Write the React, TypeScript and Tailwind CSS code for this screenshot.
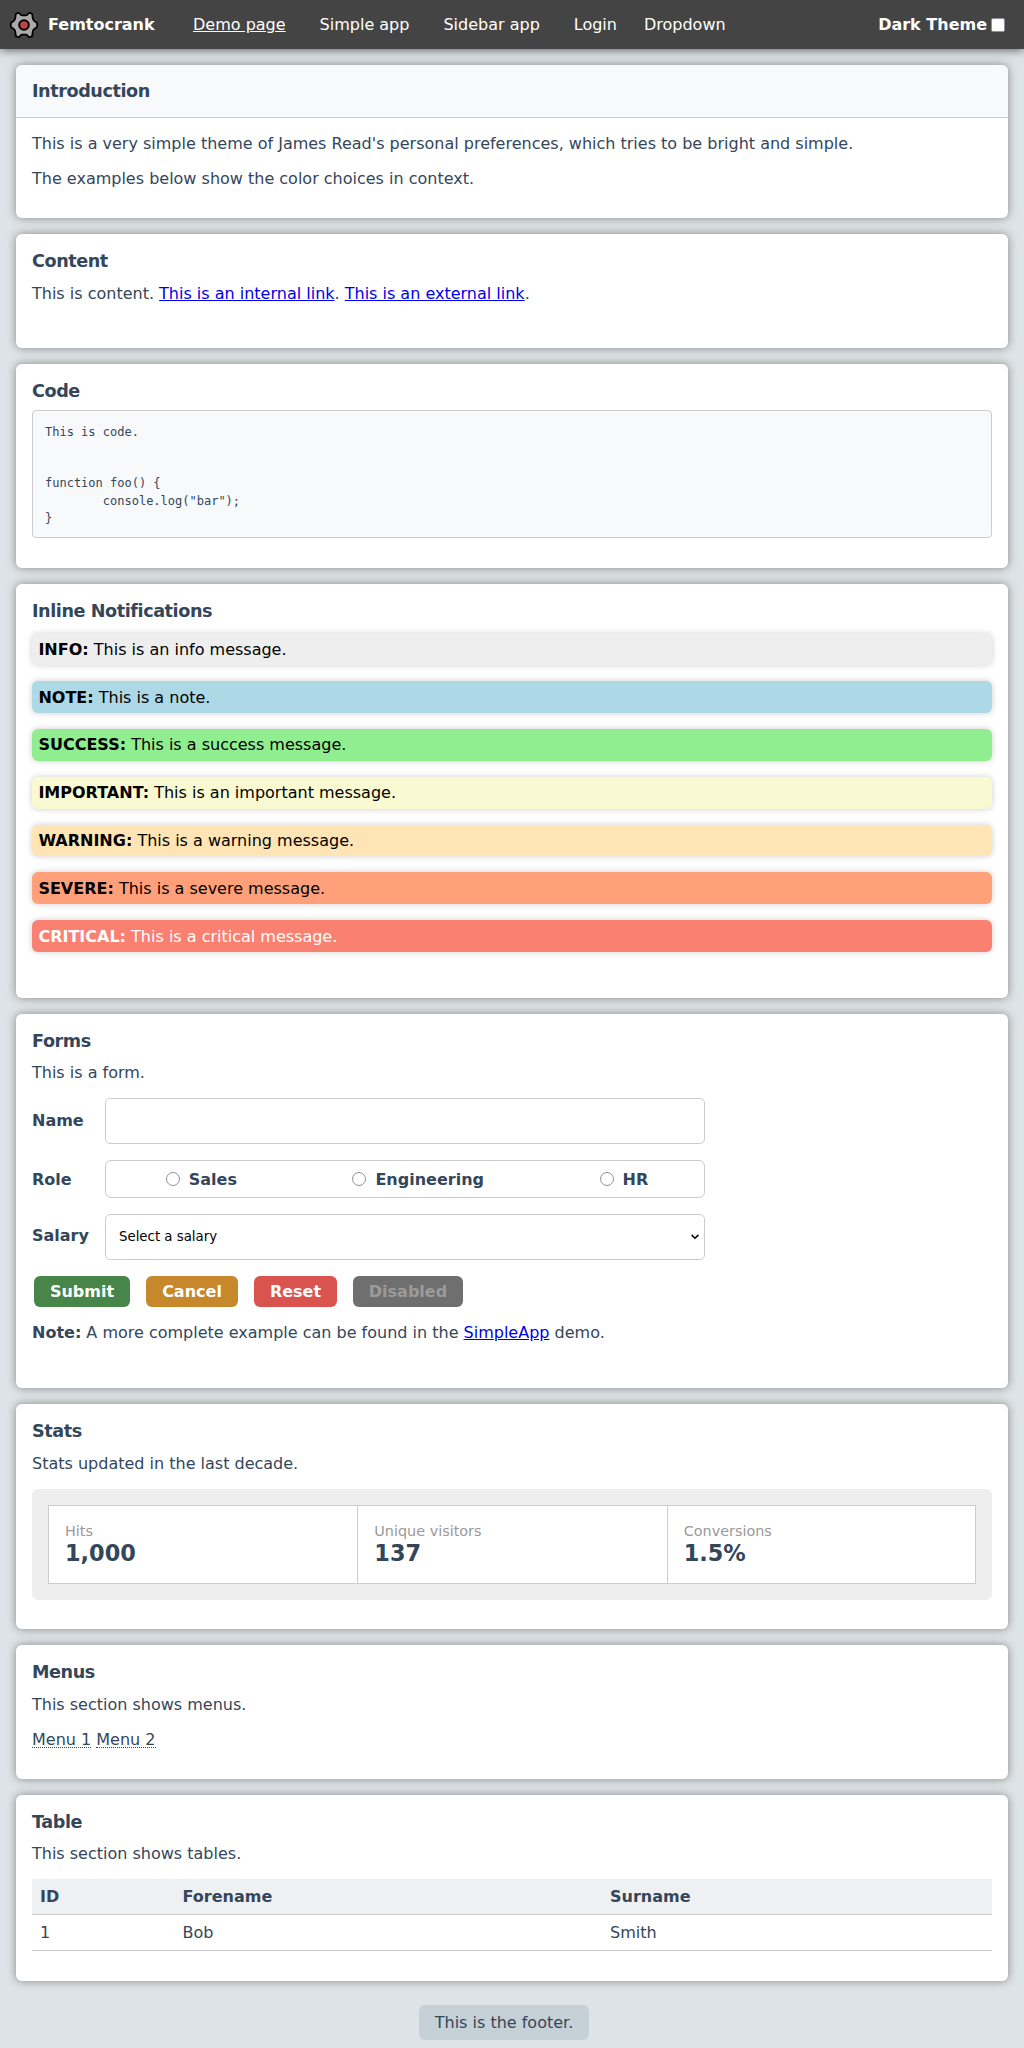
import type { ReactNode } from 'react';

function Card({ title, className, children }: { title: string; className: string; children: ReactNode }) {
  return (
    <section className={`mx-4 mb-4 rounded-md bg-white px-4 pt-[17px] shadow-[0_0_10px_#888] ${className}`}>
      <h2 className="text-[17.6px] leading-[21px] font-bold tracking-[-0.024em]">{title}</h2>
      {children}
    </section>
  );
}

const notices = [
  { label: 'INFO:', text: 'This is an info message.', tone: 'bg-[#eee] text-black' },
  { label: 'NOTE:', text: 'This is a note.', tone: 'bg-[#add8e6] text-black' },
  { label: 'SUCCESS:', text: 'This is a success message.', tone: 'bg-[#90ee90] text-black' },
  { label: 'IMPORTANT:', text: 'This is an important message.', tone: 'bg-[#fafad2] text-black' },
  { label: 'WARNING:', text: 'This is a warning message.', tone: 'bg-[#ffe4b5] text-black' },
  { label: 'SEVERE:', text: 'This is a severe message.', tone: 'bg-[#ffa07a] text-black' },
  { label: 'CRITICAL:', text: 'This is a critical message.', tone: 'bg-[#fa8072] text-white' },
];

const stats = [
  { name: 'Hits', value: '1,000' },
  { name: 'Unique visitors', value: '137' },
  { name: 'Conversions', value: '1.5%' },
];

const buttons = [
  { label: 'Submit', style: 'bg-[#488548] text-white w-24' },
  { label: 'Cancel', style: 'bg-[#c6882b] text-white w-[92px]' },
  { label: 'Reset', style: 'bg-[#d9534f] text-white w-[83px]' },
  { label: 'Disabled', style: 'bg-[#6f6f6f] text-[#9b9b9b] w-[110px]' },
];

function Gear() {
  return (
    <svg viewBox="0 0 30 28" className="h-7 w-[30px]" strokeLinejoin="round">
      <path
        d="M6.6 4 Q6.8 2.8 7.8 2.4 L9.2 1.9 Q10.3 1.6 10.9 2.9 Q11.7 4.3 13.2 4.3 L16.8 4.3 Q18.3 4.3 19.1 2.9 Q19.7 1.6 20.8 1.9 L22.2 2.4 Q23.2 2.8 23.4 4 L23.7 7 Q23.9 9.4 25.6 10.3 Q28.2 11.2 28.2 12.7 L28.2 15.3 Q28.2 16.8 25.6 17.7 Q23.9 18.6 23.7 21 L23.4 24 Q23.2 25.2 22.2 25.6 L20.8 26.1 Q19.7 26.4 19.1 25.1 Q18.3 23.7 16.8 23.7 L13.2 23.7 Q11.7 23.7 10.9 25.1 Q10.3 26.4 9.2 26.1 L7.8 25.6 Q6.8 25.2 6.6 24 L6.3 21 Q6.1 18.6 4.4 17.7 Q1.8 16.8 1.8 15.3 L1.8 12.7 Q1.8 11.2 4.4 10.3 Q6.1 9.4 6.3 7 Z"
        fill="#aaa"
        stroke="#000"
        strokeWidth="1.8"
      />
      <circle cx="15" cy="14" r="4.8" fill="#c04444" stroke="#000" strokeWidth="2" />
    </svg>
  );
}

export default function App() {
  return (
    <div className="min-h-[2048px] bg-[#dee3e7] font-['DejaVu_Sans',sans-serif] text-base leading-[19px] text-[#33465a]">
      <header className="mb-4 flex h-[49px] items-center bg-[#444] pl-[9px] text-white shadow-[0_0_10px_#444]">
        <Gear />
        <b className="ml-[9px] w-[145px]">Femtocrank</b>
        <nav className="flex gap-[34px]">
          <a className="underline">Demo page</a>
          <a>Simple app</a>
          <a>Sidebar app</a>
          <a>Login</a>
          <a className="-ml-[7px]">Dropdown</a>
        </nav>
        <label className="mr-[19px] ml-auto flex items-center gap-1 font-bold">
          Dark Theme
          <input type="checkbox" className="size-[14px] appearance-none rounded-[2px] border border-[#8f8f9d] bg-white" />
        </label>
      </header>

      <section className="mx-4 mb-4 h-[153px] rounded-md bg-white shadow-[0_0_10px_#888]">
        <div className="h-[53px] rounded-t-md border-b border-[#ccc] bg-[#f8f9fb] px-4 pt-4">
          <h2 className="text-[17.6px] leading-[21px] font-bold tracking-[-0.024em]">Introduction</h2>
        </div>
        <div className="space-y-4 px-4 pt-4">
          <p>This is a very simple theme of James Read's personal preferences, which tries to be bright and simple.</p>
          <p>The examples below show the color choices in context.</p>
        </div>
      </section>

      <Card title="Content" className="h-[114px]">
        <p className="mt-3">
          This is content. <a className="text-[#0000ee] underline">This is an internal link</a>.{' '}
          <a className="text-[#0000ee] underline">This is an external link</a>.
        </p>
      </Card>

      <Card title="Code" className="h-[204px]">
        <pre className="mt-2 h-32 rounded border border-[#ccc] bg-[#f8f9fb] px-3 py-[13px] font-['DejaVu_Sans_Mono',monospace] text-xs leading-[17.15px] [tab-size:8]">
          {'This is code.\n\n\nfunction foo() {\n\tconsole.log("bar");\n}'}
        </pre>
      </Card>

      <Card title="Inline Notifications" className="h-[414px]">
        <div className="mt-[11.5px] flex flex-col gap-4">
          {notices.map((n) => (
            <p key={n.label} className={`rounded-md p-[6.4px] shadow-[0_0_6px_#ccc] ${n.tone}`}>
              <b>{n.label}</b> {n.text}
            </p>
          ))}
        </div>
      </Card>

      <Card title="Forms" className="h-[374px]">
        <p className="mt-[11px]">This is a form.</p>
        <div className="mt-4 grid w-[673px] grid-cols-[57px_600px] items-center gap-4 font-bold">
          <span className="pb-0.5">Name</span>
          <input className="h-[46px] rounded-[5px] border border-[#ccc] bg-white" />
          <span>Role</span>
          <div className="flex h-[38px] items-center justify-around rounded-md border border-[#ccc]">
            {['Sales', 'Engineering', 'HR'].map((role) => (
              <label key={role} className="flex items-center">
                <input
                  type="radio"
                  name="role"
                  className="mr-[9px] ml-1 size-[14px] appearance-none rounded-full border border-[#8f8f9d] bg-white"
                />
                {role}
              </label>
            ))}
          </div>
          <span className="pb-1">Salary</span>
          <div className="grid items-center">
            <select className="col-start-1 row-start-1 h-[46px] appearance-none rounded-[5px] border border-[#ccc] bg-white pb-px pl-[13px] text-[13.333px] font-normal text-black">
              <option>Select a salary</option>
            </select>
            <svg
              viewBox="0 0 8 6"
              className="pointer-events-none col-start-1 row-start-1 mr-[6px] h-1.5 w-2 justify-self-end"
              fill="none"
              stroke="#000"
              strokeWidth="1.5"
            >
              <path d="M0.6 0.9 L4 4.3 L7.4 0.9" />
            </svg>
          </div>
        </div>
        <div className="mt-4 ml-0.5 flex gap-4">
          {buttons.map((b) => (
            <button key={b.label} className={`h-[31px] rounded-md font-bold ${b.style}`}>
              {b.label}
            </button>
          ))}
        </div>
        <p className="mt-4">
          <b>Note:</b> A more complete example can be found in the <a className="text-[#0000ee] underline">SimpleApp</a> demo.
        </p>
      </Card>

      <Card title="Stats" className="h-[225px]">
        <p className="mt-3">Stats updated in the last decade.</p>
        <div className="mt-4 h-[111px] rounded-md bg-[#eee] p-4">
          <dl className="grid h-[79px] grid-cols-3">
            {stats.map((s) => (
              <div key={s.name} className="border-y border-l border-[#ccc] bg-white px-4 pt-[17px] last:border-r">
                <dt className="text-[14.4px] leading-[17px] text-[#999]">{s.name}</dt>
                <dd className="text-[22.4px] leading-[26px] font-bold">{s.value}</dd>
              </div>
            ))}
          </dl>
        </div>
      </Card>

      <Card title="Menus" className="h-[134px]">
        <p className="mt-3">This section shows menus.</p>
        <p className="mt-4">
          <a className="inline-block border-b border-dotted border-[#33465a] leading-[15px]">Menu 1</a>{' '}
          <a className="inline-block border-b border-dotted border-[#33465a] leading-[15px]">Menu 2</a>
        </p>
      </Card>

      <Card title="Table" className="h-[186px]">
        <p className="mt-[11px]">This section shows tables.</p>
        <table className="mt-4 w-full table-fixed text-left">
          <thead className="bg-[#eff0f2]">
            <tr className="h-[35px] border-b border-[#ccc]">
              <th className="w-[142.5px] px-2">ID</th>
              <th className="w-[427.5px] px-2">Forename</th>
              <th className="px-2">Surname</th>
            </tr>
          </thead>
          <tbody>
            <tr className="h-9 border-b border-[#ccc]">
              <td className="px-2">1</td>
              <td className="px-2">Bob</td>
              <td className="px-2">Smith</td>
            </tr>
          </tbody>
        </table>
      </Card>

      <div className="mt-6 flex justify-center pr-4">
        <footer className="rounded-md bg-[#c6d0d7] px-4 py-2">This is the footer.</footer>
      </div>
    </div>
  );
}
